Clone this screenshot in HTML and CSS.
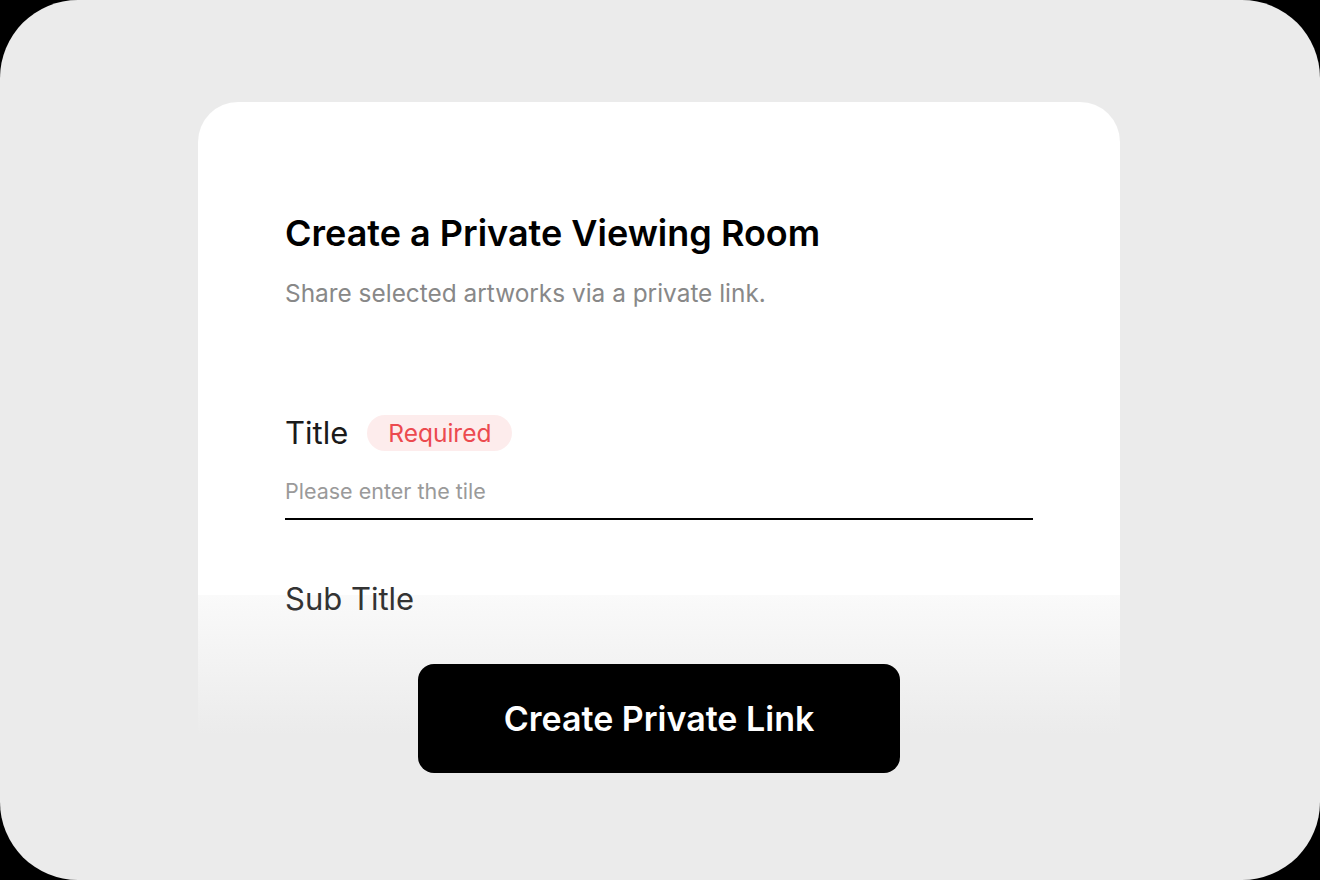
FILE: index.html
```html
<!DOCTYPE html>
<html lang="en">
<head>
    <meta charset="UTF-8">
    <meta name="viewport" content="width=device-width, initial-scale=1.0">
    <title>Create a Private Viewing Room</title>
    <link rel="stylesheet" href="styles.css">
</head>
<body>
    <div class="frame">
        <div class="sheet">
            <form class="card">
                <h1>Create a Private Viewing Room</h1>
                <p class="lead">Share selected artworks via a private link.</p>

                <div class="field">
                    <label for="title">Title <span class="badge">Required</span></label>
                    <input type="text" id="title" name="title" placeholder="Please enter the tile">
                </div>

                <div class="field">
                    <label for="subtitle">Sub Title</label>
                </div>
            </form>
            <button type="submit" class="create-btn">Create Private Link</button>
        </div>
    </div>
</body>
</html>
```

FILE: styles.css
```css
body {
    margin: 0;
    background: #000;
    font-family: Inter, "Noto Sans", sans-serif;
}
.frame {
    width: 1320px;
    height: 880px;
    background: #ebebeb;
    border-radius: 78px;
    overflow: hidden;
    display: flex;
    padding: 102px 0 0 198px;
    box-sizing: border-box;
}
.sheet {
    position: relative;
    width: 922px;
    height: 633px;
}
/* white card that fades into the frame near the bottom */
.card {
    height: 100%;
    box-sizing: border-box;
    background: linear-gradient(#fff 0, #fff 493px, #fafafa 493px, #ebebeb 100%);
    border-radius: 40px 40px 0 0;
    padding: 109px 87px 0;
    overflow: hidden;
}
h1 {
    margin: 0;
    font-size: 36px;
    font-weight: 600;
    line-height: 44px;
    color: #000;
}
.lead {
    margin: 22px 0 0;
    font-size: 24.4px;
    line-height: 32px;
    color: #888;
}
.field {
    display: flex;
    flex-direction: column;
}
.field label {
    display: flex;
    align-items: center;
    gap: 19px;
    font-size: 31px;
    line-height: 40px;
    color: #1a1a1a;
}
.field:first-of-type {
    margin-top: 104px;
}
.field + .field {
    margin-top: 59px;
}
.field + .field label {
    color: #333;
}
.badge {
    background: #fdecec;
    color: #ec4a4f;
    font-size: 24.5px;
    line-height: 36px;
    padding: 0 21px;
    border-radius: 18px;
}
.field input {
    margin-top: 24px;
    border: none;
    border-bottom: 2px solid #000;
    padding: 0 0 13px;
    font-family: inherit;
    font-size: 21.5px;
    line-height: 28px;
    color: #000;
    outline: none;
    background: transparent;
}
.field input::placeholder {
    color: #9a9a9a;
}
.create-btn {
    position: absolute;
    left: 220px;
    top: 562px;
    width: 482px;
    height: 109px;
    background: #000;
    color: #fff;
    border: none;
    border-radius: 16px;
    font-family: inherit;
    font-size: 34px;
    font-weight: 600;
    cursor: pointer;
}
```
